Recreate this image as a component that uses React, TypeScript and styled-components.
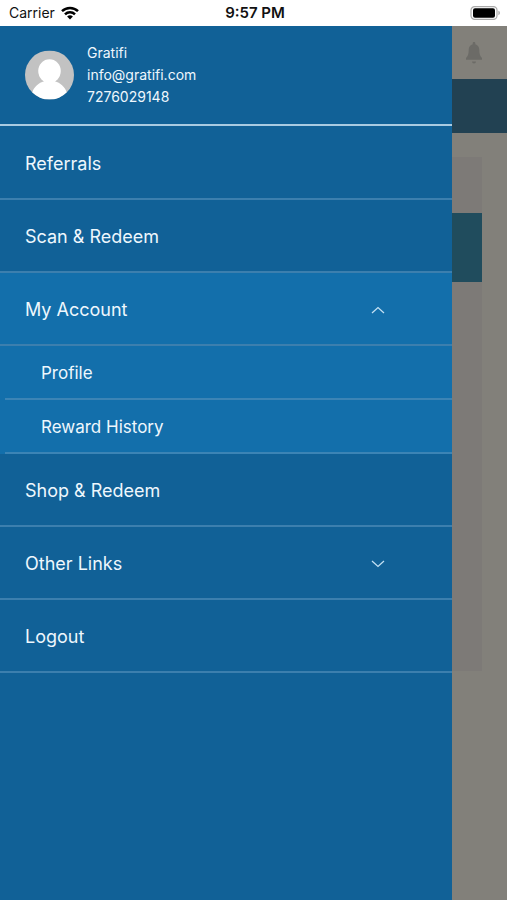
import React, { useState } from "react";
import styled, { createGlobalStyle } from "styled-components";

const GlobalStyle = createGlobalStyle`
  *, *::before, *::after { box-sizing: border-box; }
  body { margin: 0; background: #82807a; font-family: Inter, "Liberation Sans", sans-serif; }
  ul { list-style: none; margin: 0; padding: 0; }
`;

const Screen = styled.div`
  min-height: 100vh;
  display: flex;
  flex-direction: column;
`;

const StatusBar = styled.header`
  height: 26px;
  flex: none;
  display: grid;
  grid-template-columns: 1fr auto 1fr;
  align-items: center;
  padding: 0 6px 0 9px;
  background: #fff;
  color: #111;
  font-size: 14px;
  line-height: 20px;
`;

const Carrier = styled.span`
  display: flex;
  align-items: center;
  gap: 6px;
`;

const Clock = styled.time`
  font-size: 15px;
  font-weight: 600;
`;

const BatteryIcon = styled.svg`
  justify-self: end;
`;

const Stage = styled.div`
  flex: 1;
  display: grid;
`;

const DimmedPage = styled.main`
  grid-area: 1 / 1;
  background: #82807a;
`;

const PageHeader = styled.div`
  height: 53px;
  display: flex;
  justify-content: flex-end;
  align-items: center;
  padding-right: 25px;
`;

const Banner = styled.div`
  height: 54px;
  background: #224152;
`;

const Card = styled.section`
  margin: 24px 25px;
  height: 514px;
  padding-top: 56px;
  background: #7d7a77;
`;

const CardBand = styled.div`
  height: 69px;
  background: #204c5d;
`;

const Drawer = styled.aside`
  grid-area: 1 / 1;
  width: calc(100% - 55px);
  z-index: 1;
  background: #116197;
  color: #eef7fd;
`;

const Profile = styled.div`
  height: 100px;
  display: flex;
  align-items: center;
  gap: 13px;
  padding-left: 25px;
  border-bottom: 2px solid #a9cbe2;
`;

const ProfileText = styled.div`
  font-size: 14px;
  line-height: 22px;
`;

const MenuButton = styled.button<{ $open?: boolean }>`
  width: 100%;
  height: 73px;
  display: flex;
  align-items: center;
  justify-content: space-between;
  padding: 2px 67px 0 25px;
  border: 0;
  border-bottom: 2px solid #3c7fae;
  background: ${(p) => (p.$open ? "#136fab" : "transparent")};
  color: inherit;
  font: inherit;
  font-size: 18px;
  line-height: 24px;
  text-align: left;
  cursor: pointer;
`;

const SubList = styled.ul`
  padding-left: 5px;
  background: #136fab;
`;

const SubButton = styled.button`
  width: 100%;
  height: 54px;
  padding: 2px 0 0 36px;
  border: 0;
  border-bottom: 2px solid #3c84b5;
  background: transparent;
  color: inherit;
  font: inherit;
  font-size: 17px;
  line-height: 24px;
  text-align: left;
  cursor: pointer;
`;

const MenuNav = styled.nav`
  padding-top: 1px;
`;

function Chevron({ up }: { up: boolean }) {
  return (
    <svg width="14" height="8" viewBox="0 0 14 8" fill="none" stroke="#c3e0f3" strokeWidth="1.3" aria-hidden="true">
      <path d={up ? "M1 7 7 1.6 13 7" : "M1 1 7 6.4 13 1"} />
    </svg>
  );
}

type Entry = { label: string; children?: string[] };

const entries: Entry[] = [
  { label: "Referrals" },
  { label: "Scan & Redeem" },
  { label: "My Account", children: ["Profile", "Reward History"] },
  { label: "Shop & Redeem" },
  { label: "Other Links", children: [] },
  { label: "Logout" },
];

export default function App() {
  const [openLabel, setOpenLabel] = useState("My Account");

  return (
    <Screen>
      <GlobalStyle />
      <StatusBar>
        <Carrier>
          Carrier
          <svg width="18" height="14" viewBox="0 0 18 14" fill="none" stroke="#000" strokeWidth="2.5" aria-label="Wi-Fi">
            <path d="M1 5.2a11.4 11.4 0 0 1 16 0" />
            <path d="M4 8.4a7.1 7.1 0 0 1 10 0" />
            <path d="M9 13.6 6.1 10.6a4.1 4.1 0 0 1 5.8 0Z" fill="#000" stroke="none" />
          </svg>
        </Carrier>
        <Clock>9:57 PM</Clock>
        <BatteryIcon width="31" height="14" viewBox="0 0 31 14" aria-label="Battery full">
          <rect x="1" y="0.7" width="26" height="12.6" rx="3.6" fill="#fff" stroke="#aaa" strokeWidth="1.2" />
          <rect x="3" y="2.3" width="22" height="9.4" rx="2" fill="#000" />
          <path d="M28.4 4.8c2 .6 2 3.8 0 4.4Z" fill="#aaa" />
        </BatteryIcon>
      </StatusBar>
      <Stage>
        <DimmedPage>
          <PageHeader>
            <svg width="16" height="22" viewBox="0 0 16 22" fill="#6c6b67" aria-label="Notifications">
              <path d="M8 0c.8 0 1.300.5 1.300 1.300v1c2.500.6 4 2.700 4 5.500 0 4.200.7 6.200 2.700 8.200v1.700H0V16c2-2 2.700-4 2.700-8.200 0-2.800 1.500-4.900 4-5.500v-1C6.700.5 7.200 0 8 0Z" />
              <path d="M6 19.600h4a2 2 0 0 1-4 0Z" />
            </svg>
          </PageHeader>
          <Banner />
          <Card>
            <CardBand />
          </Card>
        </DimmedPage>
        <Drawer>
          <Profile>
            <svg width="49" height="50" viewBox="0 0 50 50" aria-label="Profile picture">
              <defs>
                <clipPath id="avatar-clip">
                  <circle cx="25" cy="25" r="25" />
                </clipPath>
              </defs>
              <g clipPath="url(#avatar-clip)">
                <rect width="50" height="50" fill="#c2c2c2" />
                <ellipse cx="25" cy="21" rx="11.5" ry="12" fill="#fff" />
                <path d="M19.500 29v2.500C14 33 9.500 37 7.500 42.500V50h35v-7.500C40.500 37 36 33 30.500 31.500V29Z" fill="#fff" />
              </g>
            </svg>
            <ProfileText>
              <div>Gratifi</div>
              <div>info@gratifi.com</div>
              <div>7276029148</div>
            </ProfileText>
          </Profile>
          <MenuNav aria-label="Main menu">
            <ul>
              {entries.map(({ label, children }) => {
                const open = !!children && openLabel === label;
                return (
                  <li key={label}>
                    <MenuButton
                      type="button"
                      $open={open}
                      aria-expanded={children ? open : undefined}
                      onClick={() => children && setOpenLabel(open ? "" : label)}
                    >
                      {label}
                      {children && <Chevron up={open} />}
                    </MenuButton>
                    {open && children.length > 0 && (
                      <SubList>
                        {children.map((child) => (
                          <li key={child}>
                            <SubButton type="button">{child}</SubButton>
                          </li>
                        ))}
                      </SubList>
                    )}
                  </li>
                );
              })}
            </ul>
          </MenuNav>
        </Drawer>
      </Stage>
    </Screen>
  );
}
